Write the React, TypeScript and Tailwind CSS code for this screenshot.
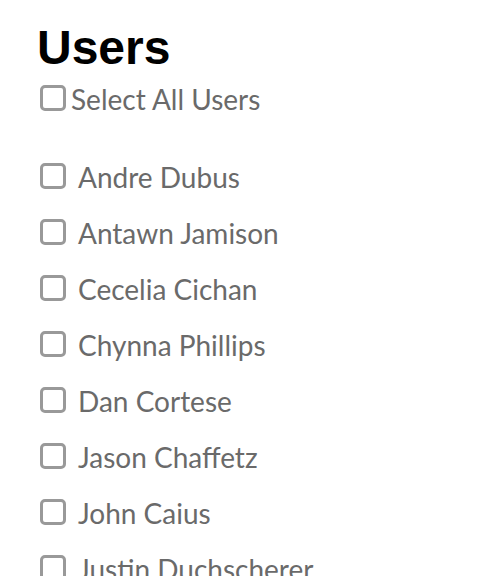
import React from 'react';

const users = [
  'Andre Dubus',
  'Antawn Jamison',
  'Cecelia Cichan',
  'Chynna Phillips',
  'Dan Cortese',
  'Jason Chaffetz',
  'John Caius',
  'Justin Duchscherer',
  'Kevin Youkilis',
  'Lisa Loeb',
];

const Box: React.FC = () => (
  <span className="mb-[3px] inline-block h-[26px] w-[26px] shrink-0 rounded-[5px] border-[3px] border-[#999999] bg-white" />
);

const App: React.FC = () => {
  return (
    <div className="min-h-screen bg-white pl-[37px] pt-[22px] font-['Lato','Liberation_Sans',sans-serif] text-[#6a6a6a]">
      <h1 className="font-['Liberation_Sans',Arial,sans-serif] text-[48px] font-bold leading-[52px] text-black">Users</h1>

      {/* select all */}
      <label className="mt-[11px] flex h-[28px] items-center pl-[3px]">
        <Box />
        <span className="ml-[5px] text-[28px] leading-none">Select All Users</span>
      </label>

      {/* user list */}
      <ul className="mt-[36px] flex flex-col">
        {users.map((name) => (
          <li key={name} className="flex h-[56px] items-center pl-[3px]">
            <Box />
            <span className="ml-[12px] text-[28px] leading-none">{name}</span>
          </li>
        ))}
      </ul>
    </div>
  );
};

export default App;
